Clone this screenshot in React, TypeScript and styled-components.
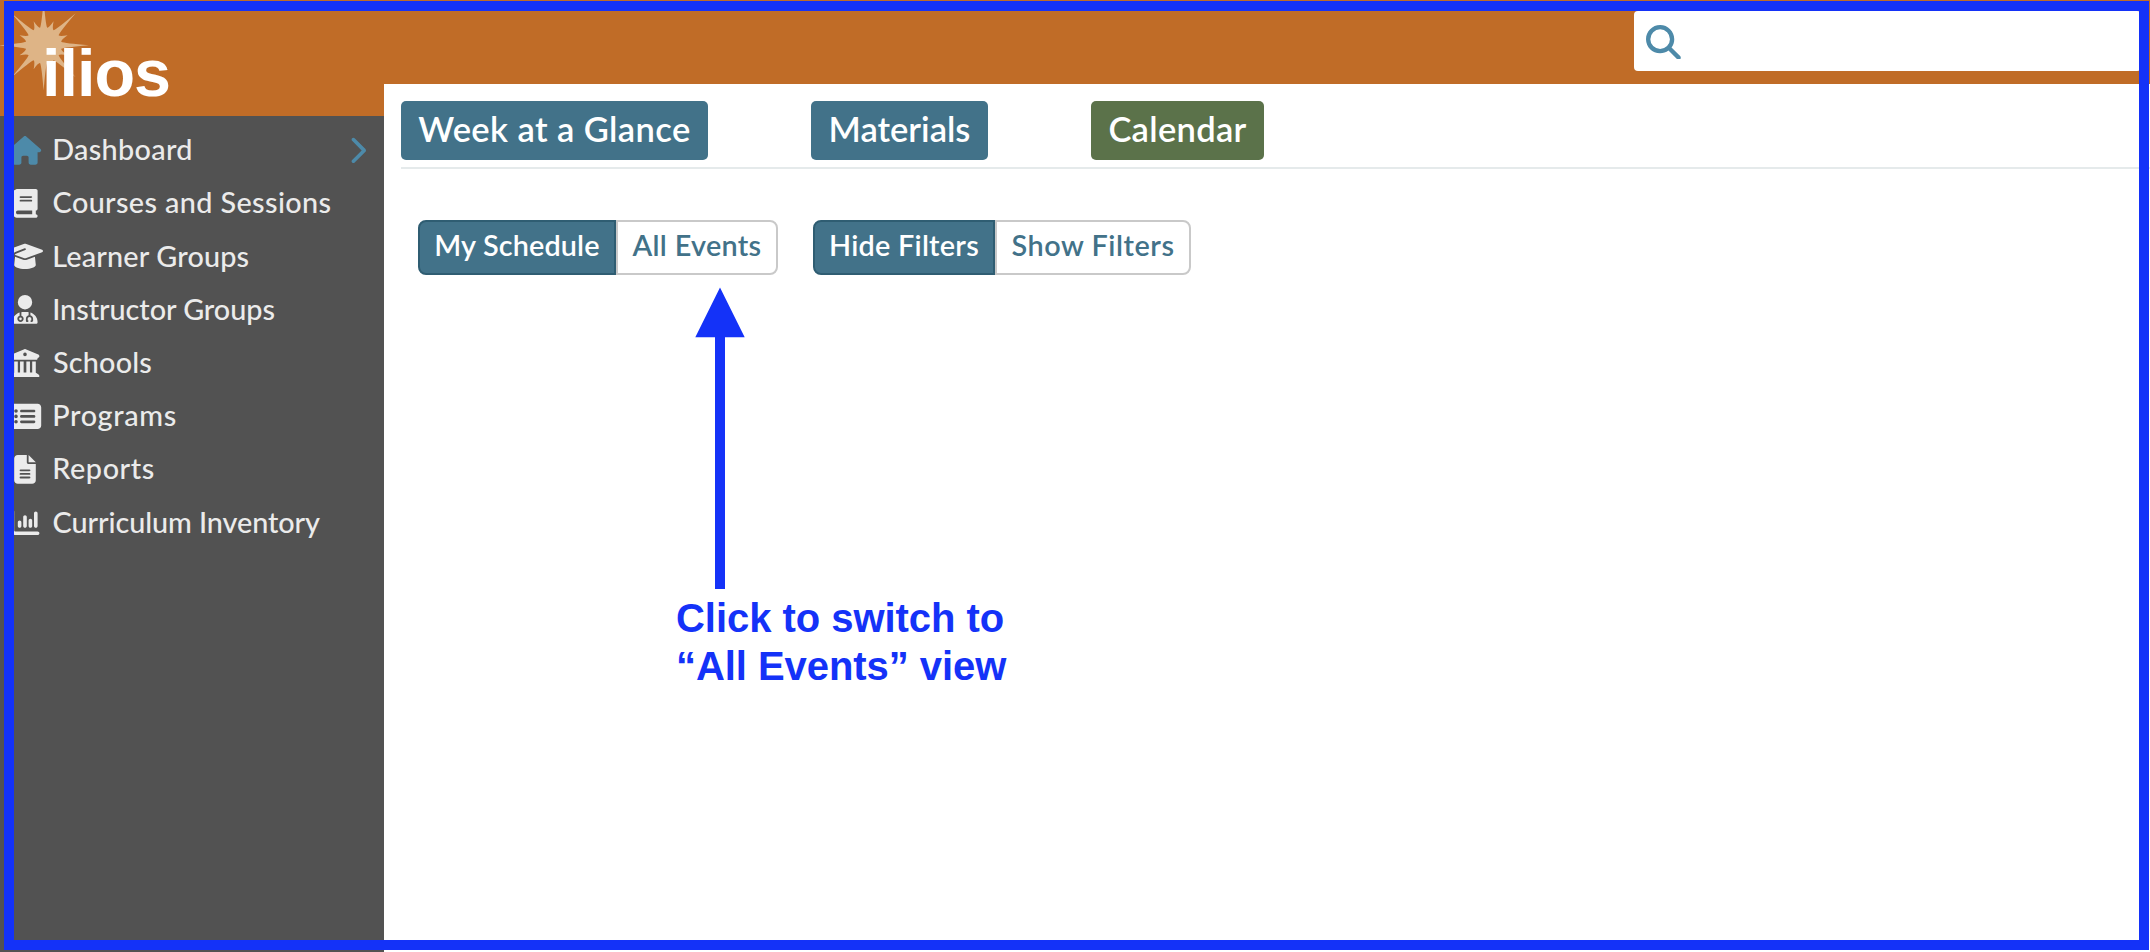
import React from "react";
import styled, { createGlobalStyle } from "styled-components";
import {
  FaBook,
  FaBuildingColumns,
  FaChartColumn,
  FaChevronRight,
  FaFileLines,
  FaGraduationCap,
  FaHouse,
  FaMagnifyingGlass,
  FaRectangleList,
  FaUserDoctor,
} from "react-icons/fa6";
import type { IconType } from "react-icons";

const colors = {
  orange: "#c06c27",
  sand: "#deb486",
  slate: "#525252",
  light: "#ebebeb",
  sky: "#4d8aa9",
  teal: "#427289",
  tealDark: "#2f5d72",
  green: "#5b724a",
  line: "#e5eaeb",
  outline: "#c9c9c9",
  marker: "#1432f8",
};

const GlobalStyle = createGlobalStyle`
  *, *::before, *::after { box-sizing: border-box; }
  body {
    margin: 0;
    background: #fff;
    font-family: Lato, "Open Sans", sans-serif;
    overflow: hidden;
  }
`;

const Page = styled.div`
  position: relative;
  display: grid;
  grid-template-columns: 384px 1fr;
  width: 2150px;
  height: 952px;
  overflow: hidden;
`;

const Sidebar = styled.aside`
  display: flex;
  flex-direction: column;
  background: ${colors.slate};
`;

const Brand = styled.div`
  position: relative;
  flex: none;
  height: 116px;
  padding: 35px 0 0 42px;
  background: ${colors.orange};
`;

const Burst = styled.svg`
  position: absolute;
  left: 0;
  top: 0;
`;

const Wordmark = styled.span`
  position: relative;
  display: block;
  font: bold 66.5px/76px "Liberation Sans", Arial, sans-serif;
  letter-spacing: -1px;
  color: #fff;
`;

const Nav = styled.nav`
  display: flex;
  flex-direction: column;
  padding-top: 7.7px;
`;

const NavItem = styled.a<{ $active?: boolean }>`
  display: grid;
  grid-template-columns: 50px 1fr 50px;
  align-items: center;
  height: 53.2px;
  padding-right: 2px;
  color: ${colors.light};
  font-size: 28.8px;
  font-weight: 500;

  && svg {
    width: 50px;
    height: 28.8px;
    color: ${(p) => (p.$active ? colors.sky : colors.light)};
  }
`;

const NavLabel = styled.span<{ $tracking: number; $indent: number }>`
  padding: 0 0 2px ${(p) => p.$indent}px;
  line-height: 36px;
  letter-spacing: ${(p) => p.$tracking}px;
  white-space: nowrap;
`;

const Content = styled.div`
  display: flex;
  flex-direction: column;
  min-width: 0;
`;

const TopBar = styled.header`
  display: flex;
  justify-content: flex-end;
  align-items: flex-start;
  height: 84px;
  padding-right: 9px;
  background: ${colors.orange};
`;

const SearchBox = styled.div`
  display: flex;
  align-items: center;
  width: 507px;
  height: 60px;
  margin-top: 11px;
  padding: 2px 0 0 12px;
  border-radius: 4px;
  background: #fff;
  color: ${colors.sky};
`;

const Tabs = styled.div`
  display: flex;
  align-items: flex-start;
  gap: 103px;
  height: 85px;
  margin-left: 17px;
  padding-top: 17px;
  border-bottom: 2px solid ${colors.line};
`;

const Tab = styled.button<{ $width: number; $tracking: number; $active?: boolean }>`
  width: ${(p) => p.$width}px;
  height: 59px;
  padding: 0 0 3px;
  border: 0;
  border-radius: 5px;
  background: ${(p) => (p.$active ? colors.green : colors.teal)};
  color: #fff;
  font: 600 34.5px/56px Lato, sans-serif;
  letter-spacing: ${(p) => p.$tracking}px;
  white-space: nowrap;
`;

const Toggles = styled.div`
  display: flex;
  gap: 35px;
  padding: 51px 0 0 34px;
`;

const ToggleGroup = styled.div`
  display: flex;
`;

const Toggle = styled.button<{ $width: number; $tracking: number; $selected?: boolean }>`
  width: ${(p) => p.$width}px;
  height: 55px;
  padding: 0 0 5px;
  border: 2px solid ${(p) => (p.$selected ? colors.tealDark : colors.outline)};
  border-radius: ${(p) => (p.$selected ? "8px 0 0 8px" : "0 8px 8px 0")};
  background: ${(p) => (p.$selected ? colors.teal : "#fff")};
  color: ${(p) => (p.$selected ? "#fff" : colors.teal)};
  font: 600 28.8px/46px Lato, sans-serif;
  letter-spacing: ${(p) => p.$tracking}px;
  white-space: nowrap;
`;

const Callout = styled.div`
  position: absolute;
  left: 676px;
  top: 287px;
  color: ${colors.marker};
`;

const Arrow = styled.svg`
  display: block;
  margin-left: 19px;
`;

const CalloutLine = styled.div<{ $tracking: number }>`
  font: bold 40px/48px "Liberation Sans", Arial, sans-serif;
  letter-spacing: ${(p) => p.$tracking}px;
  white-space: nowrap;
`;

const CalloutText = styled.div`
  margin-top: 5px;
`;

const Frame = styled.div`
  position: absolute;
  inset: 1px 1px 2px 4px;
  border: 10px solid ${colors.marker};
  pointer-events: none;
`;

// Sixteen rays: long ones every 45 degrees, short ones between them.
const burstPath = (() => {
  const cx = 43.6;
  const cy = 45.3;
  const at = (r: number, deg: number) => {
    const a = (deg * Math.PI) / 180;
    return `${(cx + r * Math.cos(a)).toFixed(2)} ${(cy + r * Math.sin(a)).toFixed(2)}`;
  };
  let d = `M${at(18, -11.25)}`;
  for (let i = 0; i < 16; i++) {
    const deg = i * 22.5;
    const long = i % 2 === 0;
    const tip = long ? 45.3 : 26;
    const bend = long ? 21 : 18;
    d += `Q${at(bend, deg - 5.5)} ${at(tip, deg)}Q${at(bend, deg + 5.5)} ${at(18, deg + 11.25)}`;
  }
  return d + "Z";
})();

type NavEntry = {
  label: string;
  icon: IconType;
  tracking: number;
  indent: number;
  active?: boolean;
};

const navEntries: NavEntry[] = [
  { label: "Dashboard", icon: FaHouse, tracking: 0.32, indent: 2.2, active: true },
  { label: "Courses and Sessions", icon: FaBook, tracking: 0.38, indent: 2.6 },
  { label: "Learner Groups", icon: FaGraduationCap, tracking: 0.18, indent: 2.2 },
  { label: "Instructor Groups", icon: FaUserDoctor, tracking: -0.04, indent: 2.2 },
  { label: "Schools", icon: FaBuildingColumns, tracking: 0.2, indent: 3 },
  { label: "Programs", icon: FaRectangleList, tracking: 0.65, indent: 2.2 },
  { label: "Reports", icon: FaFileLines, tracking: 0.6, indent: 2.2 },
  { label: "Curriculum Inventory", icon: FaChartColumn, tracking: -0.07, indent: 2.6 },
];

export default function App() {
  return (
    <>
      <GlobalStyle />
      <Page>
        <Sidebar>
          <Brand>
            <Burst width="96" height="96" viewBox="0 0 96 96">
              <path d={burstPath} fill={colors.sand} />
            </Burst>
            <Wordmark>ilios</Wordmark>
          </Brand>
          <Nav>
            {navEntries.map(({ label, icon: Icon, tracking, indent, active }) => (
              <NavItem key={label} $active={active}>
                <Icon />
                <NavLabel $tracking={tracking} $indent={indent}>
                  {label}
                </NavLabel>
                {active && <FaChevronRight />}
              </NavItem>
            ))}
          </Nav>
        </Sidebar>
        <Content>
          <TopBar>
            <SearchBox>
              <FaMagnifyingGlass size={34.8} />
            </SearchBox>
          </TopBar>
          <Tabs>
            <Tab $width={307} $tracking={0.4}>Week at a Glance</Tab>
            <Tab $width={177} $tracking={0}>Materials</Tab>
            <Tab $width={173} $tracking={0.3} $active>Calendar</Tab>
          </Tabs>
          <Toggles>
            <ToggleGroup>
              <Toggle $width={198} $tracking={0.15} $selected>My Schedule</Toggle>
              <Toggle $width={162} $tracking={0.32}>All Events</Toggle>
            </ToggleGroup>
            <ToggleGroup>
              <Toggle $width={182} $tracking={0.25} $selected>Hide Filters</Toggle>
              <Toggle $width={196} $tracking={0.55}>Show Filters</Toggle>
            </ToggleGroup>
          </Toggles>
        </Content>
        <Callout>
          <Arrow width="50" height="302" viewBox="0 0 50 302" fill="currentColor">
            <path d="M25 .5 49.7 50.3H30V302H20V50.3H.3Z" />
          </Arrow>
          <CalloutText>
            <CalloutLine $tracking={-0.04}>Click to switch to</CalloutLine>
            <CalloutLine $tracking={-0.06}>“All Events” view</CalloutLine>
          </CalloutText>
        </Callout>
        <Frame />
      </Page>
    </>
  );
}
